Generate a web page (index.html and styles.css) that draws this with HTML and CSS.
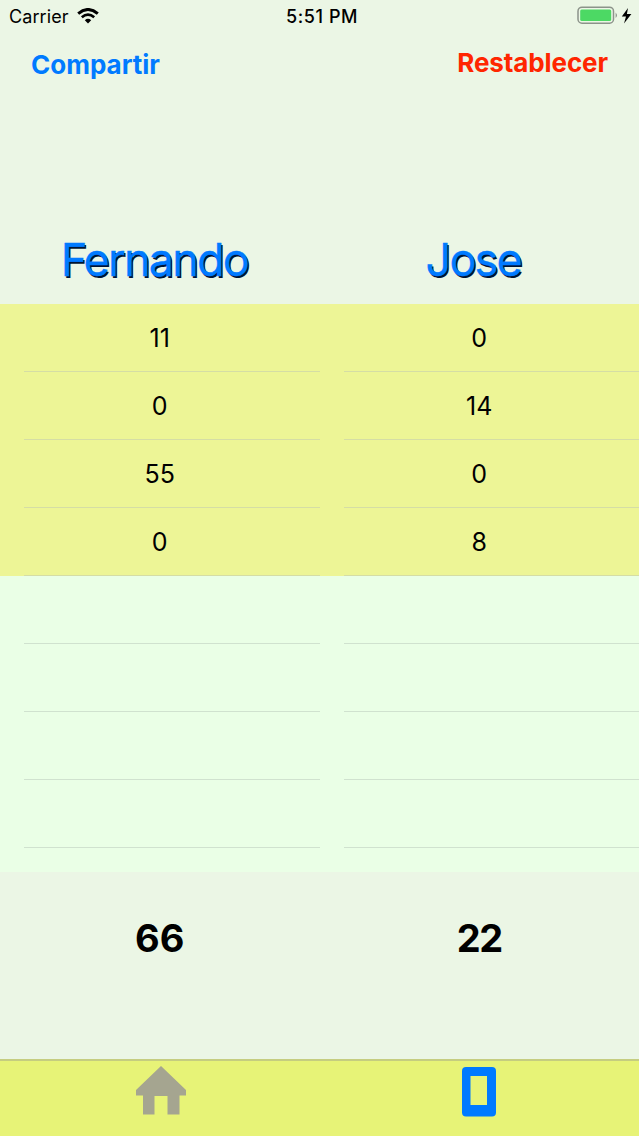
FILE: index.html
```html
<!DOCTYPE html>
<html lang="es">
<head>
<meta charset="UTF-8">
<meta name="viewport" content="width=device-width, initial-scale=1.0">
<title>Marcador</title>
<link rel="stylesheet" href="styles.css">
</head>
<body>
<div class="status">
    <div class="carrier">
        <span>Carrier</span>
        <svg class="wifi" width="22" height="16" viewBox="0 0 22 16">
            <path d="M1.2 5.6 Q11 -2.6 20.8 5.6" fill="none" stroke="#000" stroke-width="3"/>
            <path d="M4.8 9.2 Q11 4 17.2 9.2" fill="none" stroke="#000" stroke-width="2.7"/>
            <path d="M7.8 12.2 Q11 9.4 14.2 12.2 L11 15.4 Z"/>
        </svg>
    </div>
    <div class="time">5:51 PM</div>
    <div class="power">
        <svg width="56" height="20" viewBox="0 0 56 20">
            <rect x="1" y="1.2" width="35.5" height="16" rx="4" fill="none" stroke="#8c938a" stroke-width="1.5"/>
            <rect x="3.2" y="3.6" width="31" height="11.5" rx="1.5" fill="#4cd964"/>
            <path d="M38.6 6.5 Q41.4 9.3 38.6 12.1 Z" fill="#8c938a"/>
            <path d="M51 2 L44.8 10.6 H49 L47 17.6 L54.4 8.1 H49.9 Z"/>
        </svg>
    </div>
</div>

<div class="header">
    <a class="share">Compartir</a>
    <a class="reset">Restablecer</a>
</div>

<div class="players">
    <div class="name"><span class="fernando">Fernando</span></div>
    <div class="name"><span class="jose">Jose</span></div>
</div>

<div class="scores">
    <ul>
        <li><span>11</span></li>
        <li><span>0</span></li>
        <li><span>55</span></li>
        <li><span>0</span></li>
        <li class="empty"></li>
        <li class="empty"></li>
        <li class="empty"></li>
        <li class="empty"></li>
    </ul>
    <ul>
        <li><span>0</span></li>
        <li><span>14</span></li>
        <li><span>0</span></li>
        <li><span>8</span></li>
        <li class="empty"></li>
        <li class="empty"></li>
        <li class="empty"></li>
        <li class="empty"></li>
    </ul>
</div>

<div class="totals">
    <div>66</div>
    <div class="narrow">22</div>
</div>

<div class="tabs">
    <div class="tab home">
        <svg width="52" height="52" viewBox="0 0 52 52">
            <path d="M26 0 L51 24 V29.5 H44.5 V48.5 H32.5 V30 H19.5 V48.5 H8 V29.5 H1 V24 Z" fill="#a5a590"/>
        </svg>
    </div>
    <div class="tab">
        <svg width="34" height="52" viewBox="0 0 34 52">
            <path d="M4 1 H30 Q34 1 34 5 V46.5 Q34 50.5 30 50.5 H4 Q0 50.5 0 46.5 V5 Q0 1 4 1 Z M8.5 10 V39 H25 V10 Z" fill="#007aff" fill-rule="evenodd"/>
        </svg>
    </div>
</div>
</body>
</html>
```

FILE: styles.css
```css
* { margin: 0; padding: 0; box-sizing: border-box; }
body { height: 1136px; display: flex; flex-direction: column; background: #ebf6e5; color: #000; font-family: Inter, "Liberation Sans", sans-serif; overflow: hidden; }
svg { display: block; }

/* status bar */
.status { height: 40px; display: grid; grid-template-columns: 1fr auto 1fr; line-height: 32px; }
.carrier { display: flex; gap: 8px; padding-left: 9px; padding-top: 1px; font-size: 18px; letter-spacing: 0.1px; }
.wifi { margin-top: 7px; }
.time { font-size: 18px; font-weight: 500; letter-spacing: 0.6px; padding-left: 5px; padding-top: 1px; }
.power { display: flex; justify-content: flex-end; padding: 6px 6px 0 0; }

.header { height: 160px; display: flex; justify-content: space-between; padding: 0 31px; font-size: 26px; font-weight: 700; line-height: 49px; }
.share { color: #007aff; }
.reset { color: #ff2600; margin-top: -2px; letter-spacing: -0.1px; }

.players { height: 104px; display: flex; }
.name { width: 50%; padding-top: 30px; text-align: center; font-size: 45px; line-height: 60px; letter-spacing: -1.8px; color: #007aff; text-shadow: 1.5px 1.5px 0 #001433; -webkit-text-stroke: 0.4px #007aff; }
.fernando { margin-right: 11px; }
.jose { margin-right: 12px; }

/* score lists */
.scores { height: 568px; display: flex; background: #eaffe6; overflow: hidden; }
.scores ul { width: 50%; list-style: none; }
.scores li { height: 68px; padding-left: 24px; background: #edf596; }
.scores li::after { content: ""; display: block; height: 1px; background: #d5dda5; }
.scores li span { display: block; height: 67px; margin-left: -24px; text-align: center; font-size: 25px; line-height: 69px; }
.scores li.empty { padding-top: 67px; background: #eaffe6; }
.scores li.empty::after { background: #d0e2cf; }

.totals { height: 187px; display: flex; padding-top: 36px; font-size: 38px; font-weight: 700; line-height: 60px; text-align: center; }
.totals div { width: 50%; }
.totals .narrow { letter-spacing: -1.5px; }

.tabs { flex: 1; display: flex; background: #e7f377; border-top: 2px solid #c5cd80; }
.tab { width: 50%; display: flex; justify-content: center; padding-top: 5px; }
.home { padding-left: 2px; }
```
